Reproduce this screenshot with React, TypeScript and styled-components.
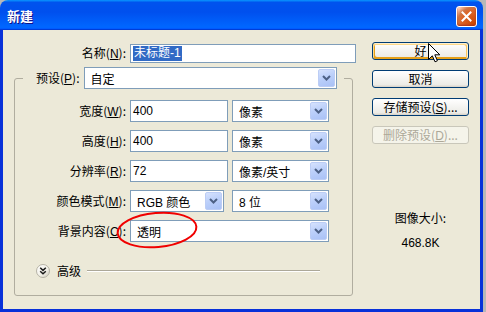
import styled, {createGlobalStyle} from 'styled-components';

const GlobalStyle = createGlobalStyle`
	html,
	body {
		margin: 0;
		padding: 0;
		background: #b8b8b8;
	}
	body {
		width: 486px;
		height: 312px;
		overflow: hidden;
		font-family: 'Liberation Sans', 'Noto Sans CJK SC', sans-serif;
		font-size: 12px;
		color: #000;
	}
`;

const Chevron = () => (
	<svg width="9" height="6" viewBox="0 0 9 6">
		<polyline points="1,1 4.5,4.5 8,1" fill="none" stroke="#4d6185" strokeWidth="2" />
	</svg>
);

// combo box as drawn by the XP theme, not a native select
const Combo = ({text, width}: {text: string; width: number}) => (
	<ComboBox $width={width}>
		<span>{text}</span>
		<DropButton>
			<Chevron />
		</DropButton>
	</ComboBox>
);

const Mnemonic = ({label, keyChar}: {label: string; keyChar: string}) => (
	<>
		{label}(<u>{keyChar}</u>):
	</>
);

const App = () => {
	return (
		<>
			<GlobalStyle />
			<Window>
				<TitleBar>
					<Title>新建</Title>
					<CloseButton aria-label="关闭">
						<svg width="11" height="11" viewBox="0 0 11 11">
							<path d="M1.5 1.5 L9.5 9.5 M9.5 1.5 L1.5 9.5" stroke="#fff" strokeWidth="2" strokeLinecap="square" />
						</svg>
					</CloseButton>
				</TitleBar>
				<Body>
					<Main>
						<NameRow>
							<Label $width={123}>
								<Mnemonic label="名称" keyChar="N" />
							</Label>
							<TextBox $width={226} $height={19}>
								<Selected>未标题-1</Selected>
							</TextBox>
						</NameRow>

						<Group>
							<Legend>
								<LegendInner>
									<Label>
										<Mnemonic label="预设" keyChar="P" />
									</Label>
									<Combo text="自定" width={253} />
								</LegendInner>
							</Legend>

							<Rows>
								<Row>
									<Label>
										<Mnemonic label="宽度" keyChar="W" />
									</Label>
									<TextBox $width={98}>400</TextBox>
									<Combo text="像素" width={97} />
								</Row>
								<Row>
									<Label>
										<Mnemonic label="高度" keyChar="H" />
									</Label>
									<TextBox $width={98}>400</TextBox>
									<Combo text="像素" width={97} />
								</Row>
								<Row>
									<Label>
										<Mnemonic label="分辨率" keyChar="R" />
									</Label>
									<TextBox $width={98}>72</TextBox>
									<Combo text="像素/英寸" width={97} />
								</Row>
								<Row>
									<Label>
										<Mnemonic label="颜色模式" keyChar="M" />
									</Label>
									<Combo text="RGB 颜色" width={94} />
									<Combo text="8 位" width={97} />
								</Row>
								<Row>
									<Label>
										<Mnemonic label="背景内容" keyChar="C" />
									</Label>
									<Wide>
										<Combo text="透明" width={199} />
									</Wide>
								</Row>
							</Rows>

							<Advanced>
								<svg width="14" height="14" viewBox="0 0 14 14">
									<defs>
										<linearGradient id="adv" x1="0" y1="0" x2="1" y2="1">
											<stop offset="0" stopColor="#ffffff" />
											<stop offset="0.6" stopColor="#f1efe6" />
											<stop offset="1" stopColor="#c9c6b8" />
										</linearGradient>
									</defs>
									<circle cx="7" cy="7" r="6.5" fill="url(#adv)" stroke="#b5b2a5" />
									<polyline points="4.2,3.8 7,6.4 9.8,3.8" fill="none" stroke="#1a1a1a" strokeWidth="1.5" />
									<polyline points="4.2,7.2 7,9.8 9.8,7.2" fill="none" stroke="#1a1a1a" strokeWidth="1.5" />
								</svg>
								<AdvancedText>高级</AdvancedText>
								<Rule />
							</Advanced>
						</Group>
					</Main>

					<Side>
						<Button $hot>好</Button>
						<Button>取消</Button>
						<Button>
							存储预设(<u>S</u>)...
						</Button>
						<Button disabled>
							删除预设(<u>D</u>)...
						</Button>
						<ImageSize>
							<div>图像大小:</div>
							<SizeValue>468.8K</SizeValue>
						</ImageSize>
					</Side>
				</Body>

				{/* annotation drawn over the screenshot */}
				<Circle width="84" height="40" viewBox="0 0 84 40">
					<ellipse cx="42" cy="20" rx="39.5" ry="17" fill="none" stroke="#f00000" strokeWidth="2" transform="rotate(-5 42 20)" />
				</Circle>
				<Pointer width="13" height="20" viewBox="0 0 13 20">
					<path d="M0.5 0.5 L0.5 16.5 L4.3 12.8 L7 18.8 L9.4 17.8 L6.8 11.8 L11.8 11.8 Z" fill="#fff" stroke="#000" strokeWidth="1" strokeLinejoin="miter" />
				</Pointer>
			</Window>
		</>
	);
};

const Window = styled.div`
	position: relative;
	width: 483px;
	height: 312px;
	display: flex;
	flex-direction: column;
`;

const TitleBar = styled.div`
	height: 30px;
	flex: none;
	display: flex;
	align-items: center;
	justify-content: space-between;
	padding: 0 6px 0 7px;
	border-radius: 8px 8px 0 0;
	background: linear-gradient(
		180deg,
		#0997ff 0%,
		#0053ee 8%,
		#0050ee 40%,
		#0066ff 88%,
		#0066ff 93%,
		#005bff 95%,
		#003dd7 96%,
		#003dd7 100%
	);
`;

const Title = styled.span`
	font-family: 'Noto Sans CJK SC', sans-serif;
	font-weight: 700;
	font-size: 13px;
	color: #fff;
	text-shadow: 1px 1px #0f1089;
	letter-spacing: 0;
	margin-top: 1px;
`;

const CloseButton = styled.button`
	width: 21px;
	height: 21px;
	padding: 0;
	margin-top: 3px;
	display: flex;
	align-items: center;
	justify-content: center;
	border: 1px solid #fff;
	border-radius: 3px;
	background: radial-gradient(circle at 90% 90%, #cc4600 0%, #dc6527 55%, #cd7546 70%, #ffccb2 90%, #fff 100%);
	background-color: #e0532c;
	box-shadow: inset 0 -1px 2px #a8321a;
`;

const Body = styled.div`
	flex: 1;
	display: flex;
	background: #ece9d8;
	border: 3px solid #0831d9;
	border-top: none;
`;

const Main = styled.div`
	width: 353px;
	display: flex;
	flex-direction: column;
`;

const NameRow = styled.div`
	display: flex;
	align-items: center;
	gap: 4px;
	margin-top: 14px;
`;

const Label = styled.label<{$width?: number}>`
	${(p) => (p.$width ? `width: ${p.$width}px;` : '')}
	text-align: right;
	white-space: nowrap;
	font-family: 'Noto Sans CJK SC', sans-serif;
	font-size: 12px;
	line-height: 14px;
	u {
		font-family: 'Liberation Sans', sans-serif;
		text-underline-offset: 1px;
	}
`;

const TextBox = styled.div<{$width: number; $height?: number}>`
	box-sizing: border-box;
	width: ${(p) => p.$width}px;
	height: ${(p) => p.$height ?? 22}px;
	border: 1px solid #7f9db9;
	background: #fff;
	padding: 0 2px;
	display: flex;
	align-items: center;
	font-family: 'Liberation Sans', 'Noto Sans CJK SC', sans-serif;
	font-size: 12px;
`;

const Selected = styled.span`
	background: #316ac5;
	color: #fff;
	padding: 1px 1px;
	line-height: 13px;
`;

const ComboBox = styled.div<{$width: number}>`
	box-sizing: border-box;
	width: ${(p) => p.$width}px;
	height: 22px;
	border: 1px solid #7f9db9;
	background: #fff;
	display: flex;
	align-items: stretch;
	span {
		flex: 1;
		display: flex;
		align-items: center;
		padding-left: 6px;
		white-space: nowrap;
		font-family: 'Liberation Sans', 'Noto Sans CJK SC', sans-serif;
		font-size: 12px;
	}
`;

const DropButton = styled.div`
	width: 15px;
	margin: 1px;
	border: 1px solid #bccdf5;
	border-radius: 2px;
	background: linear-gradient(160deg, #d6e2fd 0%, #bcd0fa 45%, #a9c1f6 100%);
	display: flex;
	align-items: center;
	justify-content: center;
`;

const Group = styled.fieldset`
	box-sizing: border-box;
	width: 339px;
	margin: 4px 0 0 11px;
	padding: 0 0 17px 0;
	border: 1px solid #b0ad9f;
	border-radius: 3px;
	min-inline-size: 0;
`;

const Legend = styled.legend`
	margin-left: 8px;
	padding: 0 7px 0 13px;
`;

const LegendInner = styled.div`
	display: flex;
	align-items: center;
	gap: 4px;
`;

const Rows = styled.div`
	display: flex;
	flex-direction: column;
	gap: 8px;
	padding-top: 11px;
`;

const Row = styled.div`
	display: grid;
	grid-template-columns: 111px 98px 97px;
	column-gap: 4px;
	align-items: center;
`;

const Wide = styled.div`
	grid-column: span 2;
`;

const Advanced = styled.div`
	display: flex;
	align-items: center;
	margin-top: 22px;
	padding-left: 21px;
`;

const AdvancedText = styled.span`
	font-family: 'Noto Sans CJK SC', sans-serif;
	font-size: 12px;
	line-height: 14px;
	margin-left: 7px;
`;

const Rule = styled.div`
	width: 233px;
	height: 1px;
	margin: 0 0 1px 6px;
	background: #aca899;
	box-shadow: 0 1px 0 #fff;
`;

const Side = styled.div`
	width: 97px;
	margin-left: 16px;
	padding-top: 12px;
	display: flex;
	flex-direction: column;
	gap: 10px;
`;

const Button = styled.button<{$hot?: boolean}>`
	box-sizing: border-box;
	height: 18px;
	width: 97px;
	padding: 0;
	border: 1px solid #003c74;
	border-radius: 3px;
	background: linear-gradient(180deg, #fff 0%, #ecebe6 86%, #d6d0c5 100%);
	font-family: 'Noto Sans CJK SC', sans-serif;
	font-size: 12px;
	line-height: 14px;
	color: #000;
	u {
		font-family: 'Liberation Sans', sans-serif;
	}
	${(p) =>
		p.$hot &&
		`box-shadow: inset -1px 1px #fff0cf, inset 1px 2px #fdd889, inset -2px 2px #fbc761, inset 2px -2px #e5a01a;`}
	&:disabled {
		border-color: #c9c7ba;
		background: #f5f4ea;
		color: #aca899;
	}
`;

const ImageSize = styled.div`
	margin-top: 57px;
	text-align: center;
	font-family: 'Noto Sans CJK SC', 'Liberation Sans', sans-serif;
	font-size: 12px;
	line-height: 14px;
`;

const SizeValue = styled.div`
	margin-top: 11px;
	font-family: 'Liberation Sans', sans-serif;
`;

const Circle = styled.svg`
	position: absolute;
	left: 115px;
	top: 210px;
	pointer-events: none;
`;

const Pointer = styled.svg`
	position: absolute;
	left: 428px;
	top: 43px;
	pointer-events: none;
`;

export default App;
